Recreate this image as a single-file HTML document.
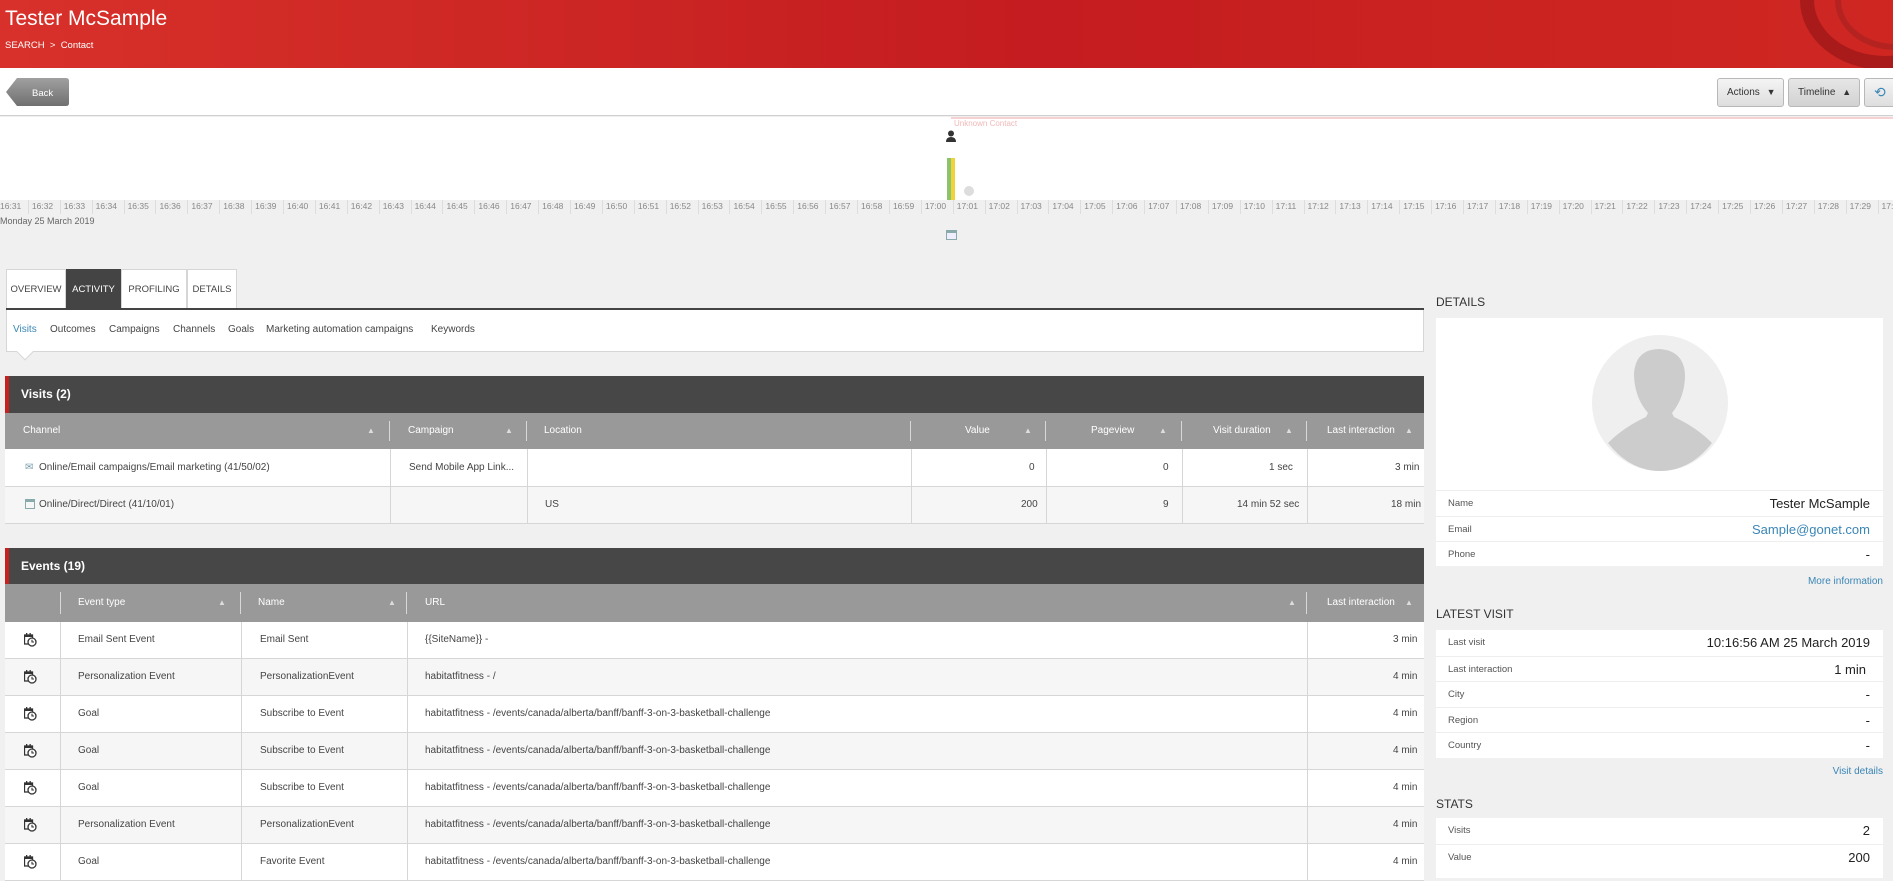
<!DOCTYPE html>
<html><head><meta charset="utf-8"><style>
*{box-sizing:border-box;margin:0;padding:0}
body{width:1893px;height:874px;overflow:hidden;background:#f0f0f0;font-family:"Liberation Sans",Arial,sans-serif;position:relative;color:#333}
.abs{position:absolute}
#hdr{left:0;top:0;width:1893px;height:68px;background:linear-gradient(90deg,#d8302a 0%,#d02a26 20%,#c41c20 55%,#cb2420 80%,#cf2622 100%);overflow:hidden}
#hdr h1{position:absolute;left:5px;top:7px;font-size:21px;font-weight:normal;color:#fff}
#hdr .bc{position:absolute;left:5px;top:40px;font-size:9.5px;color:#fff}
#bar{left:0;top:68px;width:1893px;height:48px;background:#fff;border-bottom:1px solid #d0d0d0}
.btn{position:absolute;top:10px;height:29px;border:1px solid #b8b8b8;border-radius:3px;background:linear-gradient(#f4f4f4,#dedede);font-size:10px;color:#333;line-height:27px;padding-left:9px}
#tl{left:0;top:117px;width:1893px;height:83px;background:#fff}
#ticks{left:-4px;top:200px;height:17px;display:flex;white-space:nowrap}
#ticks div{width:31.9px;flex:none;font-size:8.5px;color:#888;border-left:1px solid #ddd;padding-left:3px;line-height:13px;height:14px;background:#f0f0f0}
.tab{position:absolute;top:269px;height:41px;background:#fff;border:1px solid #d6d6d6;font-size:9.5px;line-height:39px;text-align:center;color:#444}
.sub{position:absolute;top:324px;font-size:10px;color:#444}
.panel-h{position:absolute;left:5px;width:1419px;background:#474747;border-left:4px solid #c8201f;color:#fff;font-size:12px;font-weight:bold;padding-left:12px}
.colh{position:absolute;left:5px;width:1419px;background:#999;color:#fff;font-size:10px}
.colh span,.row span{position:absolute;top:0}
.row{position:absolute;left:5px;width:1419px;border-bottom:1px solid #d6d6d6;font-size:10px;color:#444;background:#fff}
.row.alt{background:#f6f6f6}
.vd{position:absolute;top:0;bottom:0;width:1px;background:#d6d6d6}
.hd{position:absolute;top:8px;bottom:8px;width:1px;background:#d8d8d8}
.ar{font-size:8px;color:#ddd}
.sec{position:absolute;left:1436px;font-size:12px;color:#333}
.card{position:absolute;left:1436px;width:447px;background:#fff}
.kv{height:25.5px;border-top:1px solid #eee;position:relative;font-size:9.5px;color:#555;line-height:25px;padding-left:12px}
.kv b{position:absolute;right:13px;top:0;font-weight:normal;font-size:13px;color:#222}
.lnk{position:absolute;right:10px;font-size:10px;color:#3a86b6}
.ic{position:absolute;left:19px;top:11px}
</style></head><body>
<div id="hdr" class="abs">
<div style="position:absolute;left:1800px;top:-70px;width:170px;height:140px;border-radius:50%;border:14px solid #a81b1a"></div>
<div style="position:absolute;left:1835px;top:-50px;width:120px;height:100px;border-radius:50%;border:6px solid #b52321"></div>
<h1>Tester McSample</h1><div class="bc">SEARCH &nbsp;&gt;&nbsp; Contact</div></div>
<div id="bar" class="abs">
<svg class="abs" style="left:5px;top:9px" width="65" height="30"><defs><linearGradient id="g" x1="0" y1="0" x2="0" y2="1"><stop offset="0" stop-color="#a0a0a0"/><stop offset="1" stop-color="#707070"/></linearGradient></defs><path d="M1 15 L12 1 H61 Q64 1 64 4 V26 Q64 29 61 29 H12 Z" fill="url(#g)"/><text x="27" y="19" font-size="9.5" fill="#fff" font-family="Liberation Sans">Back</text></svg>
<div class="btn" style="left:1717px;width:67px">Actions <span style="font-size:9px;margin-left:4px">▼</span></div>
<div class="btn" style="left:1788px;width:72px;background:linear-gradient(#e6e6e6,#d2d2d2)">Timeline <span style="font-size:9px;margin-left:4px">▲</span></div>
<div class="btn" style="left:1864px;width:40px;color:#3a86b6;font-size:14px">⟲</div>
</div>
<div id="tl" class="abs">
<div class="abs" style="left:951px;top:0;width:942px;height:2px;background:#f6d2d2"></div>
<div class="abs" style="left:954px;top:2px;font-size:8px;color:#f2b8b8">Unknown Contact</div>
<svg class="abs" style="left:946px;top:13px" width="10" height="12"><circle cx="5" cy="3.5" r="3" fill="#333"/><path d="M0 12 Q0 7 5 7 Q10 7 10 12Z" fill="#333"/></svg>
<div class="abs" style="left:947px;top:41px;width:4px;height:42px;background:#8bc46a"></div>
<div class="abs" style="left:951px;top:41px;width:4px;height:42px;background:#f0d23a"></div>
<div class="abs" style="left:964px;top:69px;width:10px;height:10px;border-radius:50%;background:#ddd"></div>
</div>
<div id="ticks" class="abs"><div>16:31</div><div>16:32</div><div>16:33</div><div>16:34</div><div>16:35</div><div>16:36</div><div>16:37</div><div>16:38</div><div>16:39</div><div>16:40</div><div>16:41</div><div>16:42</div><div>16:43</div><div>16:44</div><div>16:45</div><div>16:46</div><div>16:47</div><div>16:48</div><div>16:49</div><div>16:50</div><div>16:51</div><div>16:52</div><div>16:53</div><div>16:54</div><div>16:55</div><div>16:56</div><div>16:57</div><div>16:58</div><div>16:59</div><div>17:00</div><div>17:01</div><div>17:02</div><div>17:03</div><div>17:04</div><div>17:05</div><div>17:06</div><div>17:07</div><div>17:08</div><div>17:09</div><div>17:10</div><div>17:11</div><div>17:12</div><div>17:13</div><div>17:14</div><div>17:15</div><div>17:16</div><div>17:17</div><div>17:18</div><div>17:19</div><div>17:20</div><div>17:21</div><div>17:22</div><div>17:23</div><div>17:24</div><div>17:25</div><div>17:26</div><div>17:27</div><div>17:28</div><div>17:29</div><div>17:30</div></div>
<div class="abs" style="left:0;top:216px;font-size:9px;color:#666">Monday 25 March 2019</div>
<div class="abs" style="left:946px;top:230px;width:11px;height:10px;border:1px solid #8aa;border-top:3px solid #8aa;background:#eef"></div>

<div class="tab" style="left:6px;width:60px">OVERVIEW</div>
<div class="tab" style="left:66px;width:55px;background:#444;color:#fff;border-color:#444">ACTIVITY</div>
<div class="tab" style="left:121px;width:66px">PROFILING</div>
<div class="tab" style="left:187px;width:50px">DETAILS</div>
<div class="abs" style="left:6px;top:308px;width:1418px;height:2px;background:#444"></div>
<div class="abs" style="left:6px;top:310px;width:1418px;height:42px;background:#fff;border:1px solid #d6d6d6;border-top:none"></div>
<div class="abs" style="left:19px;top:346px;width:12px;height:12px;background:#fff;transform:rotate(45deg);border-right:1px solid #d6d6d6;border-bottom:1px solid #d6d6d6"></div>
<span class="sub" style="left:13px;color:#3a86b6">Visits</span>
<span class="sub" style="left:50px">Outcomes</span>
<span class="sub" style="left:109px">Campaigns</span>
<span class="sub" style="left:173px">Channels</span>
<span class="sub" style="left:228px">Goals</span>
<span class="sub" style="left:266px">Marketing automation campaigns</span>
<span class="sub" style="left:431px">Keywords</span>

<div class="panel-h" style="top:376px;height:37px;line-height:37px">Visits (2)</div>
<div class="colh" style="top:413px;height:36px;line-height:36px">
<span style="left:18px">Channel</span><span class="ar" style="left:362px">▲</span><div class="hd" style="left:384px"></div>
<span style="left:403px">Campaign</span><span class="ar" style="left:500px">▲</span><div class="hd" style="left:521px"></div>
<span style="left:539px">Location</span><div class="hd" style="left:905px"></div>
<span style="left:960px">Value</span><span class="ar" style="left:1019px">▲</span><div class="hd" style="left:1040px"></div>
<span style="left:1086px">Pageview</span><span class="ar" style="left:1154px">▲</span><div class="hd" style="left:1176px"></div>
<span style="left:1208px">Visit duration</span><span class="ar" style="left:1280px">▲</span><div class="hd" style="left:1301px"></div>
<span style="left:1322px">Last interaction</span><span class="ar" style="left:1400px">▲</span></div>
<div class="row" style="top:449px;height:38px;line-height:37px"><span style="left:20px;color:#79a">✉</span><span style="left:34px">Online/Email campaigns/Email marketing (41/50/02)</span><div class="vd" style="left:385px"></div><span style="left:404px">Send Mobile App Link...</span><div class="vd" style="left:522px"></div><div class="vd" style="left:906px"></div><span style="left:1024px">0</span><div class="vd" style="left:1041px"></div><span style="left:1158px">0</span><div class="vd" style="left:1177px"></div><span style="left:1264px">1 sec</span><div class="vd" style="left:1302px"></div><span style="left:1390px">3 min</span></div>
<div class="row alt" style="top:487px;height:37px;line-height:36px"><span style="left:20px;top:12px;width:10px;height:10px;border:1px solid #8aa;border-top:3px solid #8aa"></span><span style="left:34px">Online/Direct/Direct (41/10/01)</span><div class="vd" style="left:385px"></div><div class="vd" style="left:522px"></div><span style="left:540px">US</span><div class="vd" style="left:906px"></div><span style="left:1016px">200</span><div class="vd" style="left:1041px"></div><span style="left:1158px">9</span><div class="vd" style="left:1177px"></div><span style="left:1232px">14 min 52 sec</span><div class="vd" style="left:1302px"></div><span style="left:1386px">18 min</span></div>

<div class="panel-h" style="top:548px;height:37px;line-height:36px">Events (19)</div>
<div class="colh" style="top:584px;height:38px;line-height:38px">
<div class="hd" style="left:55px"></div><span style="left:73px">Event type</span><span class="ar" style="left:213px">▲</span><div class="hd" style="left:235px"></div>
<span style="left:253px">Name</span><span class="ar" style="left:383px">▲</span><div class="hd" style="left:401px"></div>
<span style="left:420px">URL</span><span class="ar" style="left:1283px">▲</span><div class="hd" style="left:1301px"></div>
<span style="left:1322px">Last interaction</span><span class="ar" style="left:1400px">▲</span></div>
<svg width="0" height="0" style="position:absolute"><defs><g id="ci"><rect x="0.5" y="2" width="8" height="9" fill="none" stroke="#333" stroke-width="1.3"/><rect x="1" y="2" width="7" height="2" fill="#333"/><rect x="2" y="0" width="1.3" height="3" fill="#333"/><rect x="5.5" y="0" width="1.3" height="3" fill="#333"/><circle cx="8" cy="9" r="4" fill="#fff" stroke="#333" stroke-width="1.3"/><path d="M8 6.8 V9 H10" fill="none" stroke="#333" stroke-width="1.1"/></g></defs></svg>
<div class="row" style="top:622px;height:37px;line-height:36px"><svg class="ic" width="13" height="14"><use href="#ci"/></svg><div class="vd" style="left:55px"></div><span style="left:73px">Email Sent Event</span><div class="vd" style="left:236px"></div><span style="left:255px">Email Sent</span><div class="vd" style="left:402px"></div><span style="left:420px">{{SiteName}} -</span><div class="vd" style="left:1302px"></div><span style="left:1388px">3 min</span></div>
<div class="row alt" style="top:659px;height:37px;line-height:36px"><svg class="ic" width="13" height="14"><use href="#ci"/></svg><div class="vd" style="left:55px"></div><span style="left:73px">Personalization Event</span><div class="vd" style="left:236px"></div><span style="left:255px">PersonalizationEvent</span><div class="vd" style="left:402px"></div><span style="left:420px">habitatfitness - /</span><div class="vd" style="left:1302px"></div><span style="left:1388px">4 min</span></div>
<div class="row" style="top:696px;height:37px;line-height:36px"><svg class="ic" width="13" height="14"><use href="#ci"/></svg><div class="vd" style="left:55px"></div><span style="left:73px">Goal</span><div class="vd" style="left:236px"></div><span style="left:255px">Subscribe to Event</span><div class="vd" style="left:402px"></div><span style="left:420px">habitatfitness - /events/canada/alberta/banff/banff-3-on-3-basketball-challenge</span><div class="vd" style="left:1302px"></div><span style="left:1388px">4 min</span></div>
<div class="row alt" style="top:733px;height:37px;line-height:36px"><svg class="ic" width="13" height="14"><use href="#ci"/></svg><div class="vd" style="left:55px"></div><span style="left:73px">Goal</span><div class="vd" style="left:236px"></div><span style="left:255px">Subscribe to Event</span><div class="vd" style="left:402px"></div><span style="left:420px">habitatfitness - /events/canada/alberta/banff/banff-3-on-3-basketball-challenge</span><div class="vd" style="left:1302px"></div><span style="left:1388px">4 min</span></div>
<div class="row" style="top:770px;height:37px;line-height:36px"><svg class="ic" width="13" height="14"><use href="#ci"/></svg><div class="vd" style="left:55px"></div><span style="left:73px">Goal</span><div class="vd" style="left:236px"></div><span style="left:255px">Subscribe to Event</span><div class="vd" style="left:402px"></div><span style="left:420px">habitatfitness - /events/canada/alberta/banff/banff-3-on-3-basketball-challenge</span><div class="vd" style="left:1302px"></div><span style="left:1388px">4 min</span></div>
<div class="row alt" style="top:807px;height:37px;line-height:36px"><svg class="ic" width="13" height="14"><use href="#ci"/></svg><div class="vd" style="left:55px"></div><span style="left:73px">Personalization Event</span><div class="vd" style="left:236px"></div><span style="left:255px">PersonalizationEvent</span><div class="vd" style="left:402px"></div><span style="left:420px">habitatfitness - /events/canada/alberta/banff/banff-3-on-3-basketball-challenge</span><div class="vd" style="left:1302px"></div><span style="left:1388px">4 min</span></div>
<div class="row" style="top:844px;height:37px;line-height:36px"><svg class="ic" width="13" height="14"><use href="#ci"/></svg><div class="vd" style="left:55px"></div><span style="left:73px">Goal</span><div class="vd" style="left:236px"></div><span style="left:255px">Favorite Event</span><div class="vd" style="left:402px"></div><span style="left:420px">habitatfitness - /events/canada/alberta/banff/banff-3-on-3-basketball-challenge</span><div class="vd" style="left:1302px"></div><span style="left:1388px">4 min</span></div>

<div class="sec" style="top:295px">DETAILS</div>
<div class="card" style="top:318px;height:248px">
<svg class="abs" style="left:156px;top:17px" width="136" height="136"><circle cx="68" cy="68" r="68" fill="#efefef"/><path d="M42 38 Q44 14 68 14 Q92 16 93 40 Q93 62 80 78 L82 82 Q104 92 120 108 Q98 136 68 136 Q38 136 16 108 Q32 92 54 82 L56 78 Q42 62 42 38Z" fill="#ccc"/></svg>
<div style="position:absolute;top:172px;left:0;right:0">
<div class="kv">Name<b>Tester McSample</b></div>
<div class="kv">Email<b style="color:#3a86b6">Sample@gonet.com</b></div>
<div class="kv">Phone<b>-</b></div></div></div>
<div class="lnk" style="top:576px">More information</div>
<div class="sec" style="top:607px">LATEST VISIT</div>
<div class="card" style="top:630px;height:128px">
<div class="kv" style="border:none">Last visit<b>10:16:56 AM 25 March 2019</b></div>
<div class="kv">Last interaction<b style="right:17px">1 min</b></div>
<div class="kv">City<b>-</b></div>
<div class="kv">Region<b>-</b></div>
<div class="kv">Country<b>-</b></div></div>
<div class="lnk" style="top:766px">Visit details</div>
<div class="sec" style="top:797px">STATS</div>
<div class="card" style="top:818px;height:60px">
<div class="kv" style="border:none">Visits<b>2</b></div>
<div class="kv">Value<b>200</b></div></div>
</body></html>
